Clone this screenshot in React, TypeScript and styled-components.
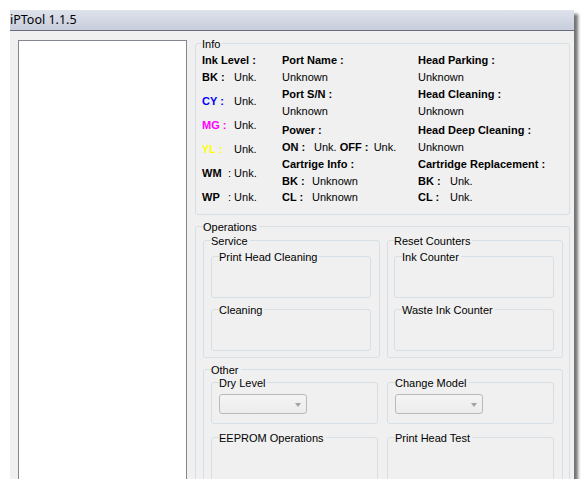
import React from 'react';
import styled, { createGlobalStyle } from 'styled-components';

const GlobalStyle = createGlobalStyle`
  body {
    margin: 0;
    background: #ffffff;
    font-family: "Liberation Sans", Arial, sans-serif;
    font-size: 11px;
    color: #000;
  }
`;

// Window frame
const Window = styled.div`
  margin: 10px 0 0 10px;
  width: 564px;
  height: 469px;
  background: #f0f0f0;
  box-shadow: 4px 4px 3px rgba(0, 0, 0, 0.55);
  overflow: hidden;
  display: flex;
  flex-direction: column;
`;

const TitleBar = styled.div`
  height: 21px;
  flex-shrink: 0;
  display: flex;
  align-items: center;
  padding-bottom: 2px;
  box-sizing: border-box;
  border-bottom: 1px solid #686d79;
  background: linear-gradient(to bottom, #dee2eb, #c8cddc);
  font-family: "Noto Sans", "Open Sans", sans-serif;
  font-size: 12.5px;
  color: #000;
`;

const Body = styled.div`
  display: flex;
  align-items: flex-start;
  gap: 8px;
  padding-left: 8px;
`;

const ListBox = styled.div`
  margin-top: 9px;
  width: 169px;
  height: 440px;
  box-sizing: border-box;
  background: #fff;
  border: 1px solid #828790;
  flex-shrink: 0;
`;

const RightColumn = styled.div`
  width: 375px;
  padding-top: 6px;
  display: flex;
  flex-direction: column;
`;

// Group boxes
const GroupBox = styled.fieldset`
  margin: 0;
  min-width: 0;
  box-sizing: border-box;
  border: 1px solid #d5dfe5;
  border-radius: 3px;
`;

const Legend = styled.legend`
  padding: 1px 2px 0 0;
  font-size: 11px;
  line-height: 12px;
  color: #000;
`;

const InfoBox = styled(GroupBox)`
  padding: 2px 0 8px 6px;
`;

const OperationsBox = styled(GroupBox)`
  margin-top: 5px;
  padding: 1px 6px 0 7px;
`;

const SectionBox = styled(GroupBox)<{ $left: number; $right: number }>`
  padding: 3px ${p => p.$right}px 6px ${p => p.$left}px;
  display: flex;
  flex-direction: column;
  gap: 5px;
`;

const OtherBox = styled(GroupBox)`
  margin-top: 5px;
  padding: 0 7px 10px 7px;
`;

const SlotBox = styled(GroupBox)<{ $h?: number }>`
  height: ${p => p.$h ?? 48}px;
  padding: 0 7px 0 7px;
`;

const ComboSlot = styled(SlotBox)`
  padding-top: 5px;
`;

const SectionGrid = styled.div`
  display: grid;
  grid-template-columns: 177px 176px;
  column-gap: 7px;
`;

const OtherGrid = styled.div`
  display: grid;
  grid-template-columns: 167px 167px;
  column-gap: 9px;
  row-gap: 7px;
`;

// Info content
const InfoGrid = styled.div`
  display: grid;
  grid-template-columns: 80px 136px 1fr;
`;

const Column = styled.div`
  display: flex;
  flex-direction: column;
`;

const Row = styled.div<{ $mt?: number; $bold?: boolean }>`
  height: 17px;
  line-height: 17px;
  margin-top: ${p => p.$mt ?? 0}px;
  white-space: nowrap;
  font-size: 11px;
  font-weight: ${p => (p.$bold ? 'bold' : 'normal')};
`;

const Label = styled.span<{ $w: number; $color?: string }>`
  display: inline-block;
  width: ${p => p.$w}px;
  font-weight: bold;
  color: ${p => p.$color ?? '#000'};
  white-space: pre;
`;

// Combo box
const Combo = styled.div`
  width: 88px;
  height: 20px;
  box-sizing: border-box;
  border: 1px solid #b9b9b9;
  border-radius: 3px;
  background: linear-gradient(to bottom, #f4f4f4, #ececec);
  display: flex;
  align-items: center;
  justify-content: flex-end;
  padding-right: 5px;
`;

const ComboArrow = styled.span`
  width: 0;
  height: 0;
  border-left: 3.5px solid transparent;
  border-right: 3.5px solid transparent;
  border-top: 4px solid #a3a3a3;
  margin-top: 1px;
`;

const inks = [
  { name: 'CY', color: '#0000ff' },
  { name: 'MG', color: '#ff00ff' },
  { name: 'YL', color: '#ffff00' },
];

const App: React.FC = () => {
  return (
    <>
      <GlobalStyle />
      <Window>
        <TitleBar>iPTool 1.1.5</TitleBar>
        <Body>
          <ListBox />
          <RightColumn>
            <InfoBox>
              <Legend>Info</Legend>
              <InfoGrid>
                <Column>
                  <Row $bold>Ink Level :</Row>
                  <Row>
                    <Label $w={32}>BK :</Label>Unk.
                  </Row>
                  {inks.map(ink => (
                    <Row key={ink.name} $mt={7}>
                      <Label $w={32} $color={ink.color}>
                        {ink.name} :
                      </Label>
                      Unk.
                    </Row>
                  ))}
                  <Row $mt={7}>
                    <Label $w={26}>WM</Label>: Unk.
                  </Row>
                  <Row $mt={7}>
                    <Label $w={26}>WP</Label>: Unk.
                  </Row>
                </Column>
                <Column>
                  <Row $bold>Port Name :</Row>
                  <Row>Unknown</Row>
                  <Row $bold>Port S/N :</Row>
                  <Row>Unknown</Row>
                  <Row $bold $mt={2}>Power :</Row>
                  <Row>
                    <Label $w={32}>ON :</Label>
                    Unk.<Label $w={37}> OFF :</Label>Unk.
                  </Row>
                  <Row $bold>Cartrige Info :</Row>
                  <Row>
                    <Label $w={30}>BK :</Label>Unknown
                  </Row>
                  <Row $mt={-1}>
                    <Label $w={30}>CL :</Label>Unknown
                  </Row>
                </Column>
                <Column>
                  <Row $bold>Head Parking :</Row>
                  <Row>Unknown</Row>
                  <Row $bold>Head Cleaning :</Row>
                  <Row>Unknown</Row>
                  <Row $bold $mt={2}>Head Deep Cleaning :</Row>
                  <Row>Unknown</Row>
                  <Row $bold>Cartridge Replacement :</Row>
                  <Row>
                    <Label $w={32}>BK :</Label>Unk.
                  </Row>
                  <Row $mt={-1}>
                    <Label $w={32}>CL :</Label>Unk.
                  </Row>
                </Column>
              </InfoGrid>
            </InfoBox>

            <OperationsBox>
              <Legend>Operations</Legend>
              <SectionGrid>
                <SectionBox $left={7} $right={8}>
                  <Legend>Service</Legend>
                  <SlotBox>
                    <Legend>Print Head Cleaning</Legend>
                  </SlotBox>
                  <SlotBox>
                    <Legend>Cleaning</Legend>
                  </SlotBox>
                </SectionBox>
                <SectionBox $left={6} $right={8}>
                  <Legend>Reset Counters</Legend>
                  <SlotBox>
                    <Legend>Ink Counter</Legend>
                  </SlotBox>
                  <SlotBox>
                    <Legend>Waste Ink Counter</Legend>
                  </SlotBox>
                </SectionBox>
              </SectionGrid>

              <OtherBox>
                <Legend>Other</Legend>
                <OtherGrid>
                  <ComboSlot>
                    <Legend>Dry Level</Legend>
                    <Combo>
                      <ComboArrow />
                    </Combo>
                  </ComboSlot>
                  <ComboSlot>
                    <Legend>Change Model</Legend>
                    <Combo>
                      <ComboArrow />
                    </Combo>
                  </ComboSlot>
                  <SlotBox $h={60}>
                    <Legend>EEPROM Operations</Legend>
                  </SlotBox>
                  <SlotBox $h={60}>
                    <Legend>Print Head Test</Legend>
                  </SlotBox>
                </OtherGrid>
              </OtherBox>
            </OperationsBox>
          </RightColumn>
        </Body>
      </Window>
    </>
  );
};

export default App;
